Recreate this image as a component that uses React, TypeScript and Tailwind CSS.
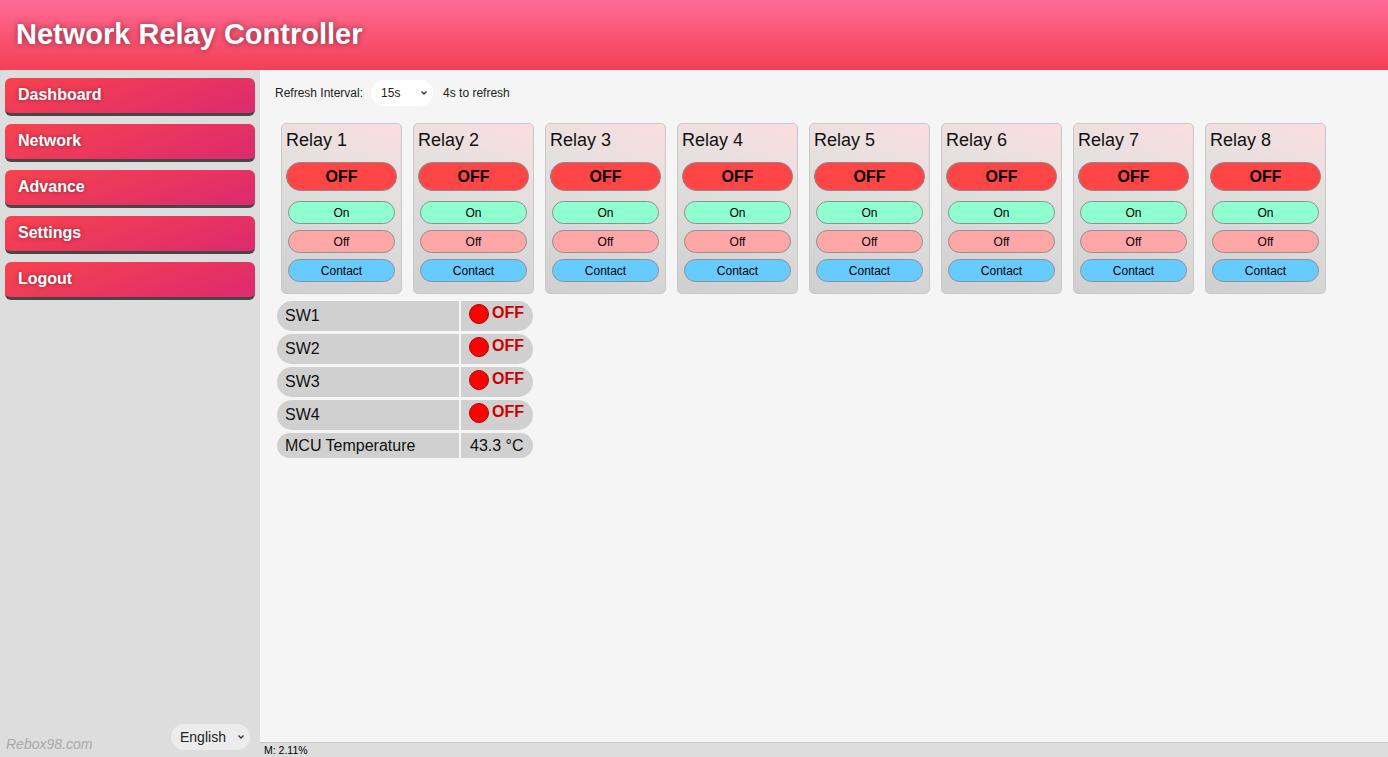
import React from "react";

const navItems = ["Dashboard", "Network", "Advance", "Settings", "Logout"];
const relays = [1, 2, 3, 4, 5, 6, 7, 8];
const switches = ["SW1", "SW2", "SW3", "SW4"];

function Chevron() {
  return (
    <svg width="8" height="6" viewBox="0 0 8 6" className="shrink-0">
      <polyline points="1.5,1.5 4,4 6.5,1.5" fill="none" stroke="#333" strokeWidth="1.3" />
    </svg>
  );
}

function RelayCard({ n }: { n: number }) {
  return (
    <div className="w-[121px] h-[171px] rounded-[5px] border border-[#c8c8c8] bg-[linear-gradient(200deg,#fcdede_0%,#e4e0e0_35%,#cfcfcf_100%)] flex flex-col">
      <div className="pl-[4px] pt-[4px] h-[38px] text-[18px] text-[#111] leading-[24px]">Relay {n}</div>
      <div className="mx-[4px] h-[29px] rounded-full bg-[#ff4545] border border-[#8a8a8a] flex items-center justify-center text-[16px] font-bold text-black">
        OFF
      </div>
      <div className="mx-[6px] mt-[10px] flex flex-col gap-[6px]">
        <div className="h-[23px] rounded-full bg-[#8fffcf] border border-[#909090] flex items-center justify-center text-[12px] text-black">On</div>
        <div className="h-[23px] rounded-full bg-[#ffa6a6] border border-[#909090] flex items-center justify-center text-[12px] text-black">Off</div>
        <div className="h-[23px] rounded-full bg-[#66ccff] border border-[#909090] flex items-center justify-center text-[12px] text-black">Contact</div>
      </div>
    </div>
  );
}

export default function App() {
  return (
    <div className="h-screen w-full flex flex-col bg-[#f5f5f5] font-['Liberation_Sans',Arial,sans-serif] overflow-hidden">
      <header className="h-[70px] shrink-0 bg-[linear-gradient(to_bottom,#ff6b95,#f43f56)] flex items-center pl-[16px]">
        <h1 className="text-[29px] font-bold text-white [text-shadow:0_0_6px_rgba(0,0,0,0.45)] leading-none pb-[2px]">
          Network Relay Controller
        </h1>
      </header>
      <div className="flex flex-1 min-h-0">
        <aside className="w-[260px] shrink-0 bg-[#dddddd] flex flex-col justify-between">
          <nav className="flex flex-col gap-[8px] pt-[8px] px-[5px]">
            {navItems.map((item) => (
              <div
                key={item}
                className="h-[38px] rounded-[6px] border-b-[3px] border-[#474747] bg-[linear-gradient(160deg,#f7434d,#dc2a6f)] pl-[13px] pt-[7px] text-[16px] font-bold text-white [text-shadow:0_0_4px_rgba(0,0,0,0.4)] leading-[20px]"
              >
                {item}
              </div>
            ))}
          </nav>
          <div className="flex items-end justify-between pl-[6px] pr-[10px] pb-[6px]">
            <span className="italic text-[14px] text-[#a9a9a9] leading-none">Rebox98.com</span>
            <div className="w-[79px] h-[26px] rounded-full bg-[#ececec] flex items-center justify-between pl-[9px] pr-[5px] mb-[1px] text-[14px] text-[#222]">
              <span>English</span>
              <Chevron />
            </div>
          </div>
        </aside>
        <main className="flex-1 flex flex-col min-w-0">
          <div className="flex-1 px-[15px] pt-[10px]">
            <div className="flex items-center h-[26px] text-[12px] text-[#222]">
              <span>Refresh Interval:</span>
              <div className="ml-[8px] w-[62px] h-[26px] rounded-full bg-white flex items-center justify-between pl-[10px] pr-[5px] text-[12px]">
                <span>15s</span>
                <Chevron />
              </div>
              <span className="ml-[10px]">4s to refresh</span>
            </div>
            <div className="flex gap-[11px] pl-[6px] mt-[17px]">
              {relays.map((n) => (
                <RelayCard key={n} n={n} />
              ))}
            </div>
            <div className="mt-[7px] pl-[2px] w-[258px] flex flex-col gap-[3px] text-[16px] text-[#111]">
              {switches.map((sw) => (
                <div key={sw} className="flex gap-[2px] h-[30px]">
                  <div className="w-[182px] rounded-l-full bg-[#d0d0d0] pl-[8px] flex items-center">{sw}</div>
                  <div className="w-[72px] rounded-r-full bg-[#d0d0d0] pl-[8px] pt-[3px] flex items-start">
                    <span className="w-[20px] h-[20px] rounded-full bg-[#ff0000] border border-[#b00000] shrink-0" />
                    <span className="ml-[3px] font-bold text-[#cc0000] leading-[18px]">OFF</span>
                  </div>
                </div>
              ))}
              <div className="flex gap-[2px] h-[25px]">
                <div className="w-[182px] rounded-l-full bg-[#d0d0d0] pl-[8px] flex items-center">MCU Temperature</div>
                <div className="w-[72px] rounded-r-full bg-[#d0d0d0] pl-[9px] flex items-center">43.3 °C</div>
              </div>
            </div>
          </div>
          <div className="h-[15px] shrink-0 bg-[#dddddd] border-t border-[#c8c8c8] pl-[4px] text-[10.5px] leading-[14px] text-black">
            M: 2.11%
          </div>
        </main>
      </div>
    </div>
  );
}
